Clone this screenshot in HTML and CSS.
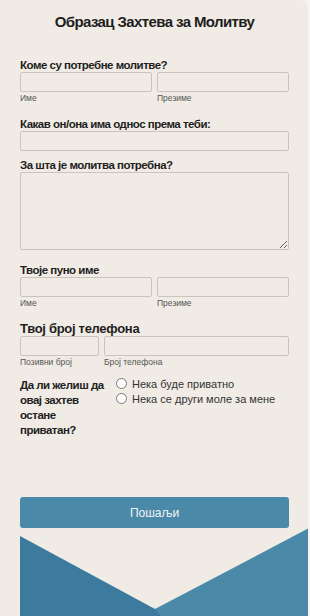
FILE: index.html
```html
<!DOCTYPE html>
<html lang="sr">
<head>
    <meta charset="UTF-8">
    <meta name="viewport" content="width=device-width, initial-scale=1.0">
    <title>Образац Захтева за Молитву</title>
    <link rel="stylesheet" href="styles.css">
</head>
<body>
    <div class="card">
        <h1 class="title">Образац Захтева за Молитву</h1>

        <div class="field first">
            <label class="label">Коме су потребне молитве?</label>
            <div class="row half">
                <div class="col">
                    <input type="text" class="input">
                    <span class="sub">Име</span>
                </div>
                <div class="col">
                    <input type="text" class="input">
                    <span class="sub">Презиме</span>
                </div>
            </div>
        </div>

        <div class="field">
            <label class="label">Какав он/она има однос према теби:</label>
            <input type="text" class="input">
        </div>

        <div class="field">
            <label class="label">За шта је молитва потребна?</label>
            <textarea class="input area"></textarea>
        </div>

        <div class="field">
            <label class="label">Твоје пуно име</label>
            <div class="row half">
                <div class="col">
                    <input type="text" class="input">
                    <span class="sub">Име</span>
                </div>
                <div class="col">
                    <input type="text" class="input">
                    <span class="sub">Презиме</span>
                </div>
            </div>
        </div>

        <div class="field">
            <label class="label big">Твој број телефона</label>
            <div class="row phone">
                <div class="col">
                    <input type="text" class="input">
                    <span class="sub">Позивни број</span>
                </div>
                <div class="col">
                    <input type="text" class="input">
                    <span class="sub">Број телефона</span>
                </div>
            </div>
        </div>

        <div class="private">
            <div class="question">Да ли желиш да овај захтев остане приватан?</div>
            <div class="options">
                <label class="option"><input type="radio" name="priv"><span>Нека буде приватно</span></label>
                <label class="option"><input type="radio" name="priv"><span>Нека се други моле за мене</span></label>
            </div>
        </div>

        <button class="send">Пошаљи</button>

        <!-- коверат испод дугмета -->
        <svg class="envelope" width="289" height="89" viewBox="0 0 289 89">
            <rect x="0" y="0" width="289" height="89" fill="#4a89a8"/>
            <polygon points="0,8 135,81 142,89 0,89" fill="#3c7b9d"/>
            <polygon points="0,0 289,0 135,81 0,8" fill="#f0ece5"/>
        </svg>
    </div>
</body>
</html>
```

FILE: styles.css
```css
body {
    margin: 0;
    background: #f7f5f1;
    font-family: "Liberation Sans", Arial, sans-serif;
    color: #222;
}
.card {
    width: 308px;
    height: 616px;
    box-sizing: border-box;
    padding: 12px 19px 0 20px;
    background: #f0ece5;
    border-radius: 0 6px 0 0;
    overflow: hidden;
}
.title {
    margin: 0;
    font-size: 15px;
    line-height: 20px;
    letter-spacing: -0.6px;
    text-align: center;
    color: #1e1e1e;
}
.field {
    margin-top: 7px;
}
.field.first {
    margin-top: 26px;
}
.label {
    display: block;
    font-size: 11.5px;
    font-weight: bold;
    line-height: 14px;
    letter-spacing: -0.5px;
    color: #1e1e1e;
}
.label.big {
    font-size: 13px;
    line-height: 14px;
    letter-spacing: -0.3px;
}
.input {
    display: block;
    width: 100%;
    height: 20px;
    box-sizing: border-box;
    margin: 0;
    border: 1px solid #c9c5be;
    border-radius: 2px;
    background: #f0ece5;
    font: inherit;
}
.area {
    height: 78px;
    margin-bottom: 13px;
    resize: vertical;
}
.row {
    display: flex;
    gap: 5px;
}
.row.half .col {
    flex: 1;
}
.row.phone .col:first-child {
    width: 79px;
    flex: none;
}
.row.phone .col:last-child {
    flex: 1;
}
.sub {
    display: block;
    margin-bottom: 6px;
    font-size: 8.5px;
    line-height: 12px;
    color: #555;
}
.private {
    display: flex;
    margin-top: 2px;
}
.question {
    width: 92px;
    padding-top: 2px;
    font-size: 11.5px;
    font-weight: bold;
    line-height: 15px;
    letter-spacing: -0.5px;
}
.options {
    display: flex;
    flex-direction: column;
    padding-left: 4px;
}
.option {
    display: flex;
    align-items: center;
    height: 15px;
    font-size: 11px;
    color: #333;
}
.option input {
    width: 11px;
    height: 11px;
    margin: 0 5px 0 0;
}
.send {
    display: block;
    width: 100%;
    height: 31px;
    margin-top: 59px;
    border: none;
    border-radius: 3px;
    background: #4a8aa8;
    color: #f4f4f4;
    font-family: inherit;
    font-size: 12px;
}
.envelope {
    display: block;
}
```
